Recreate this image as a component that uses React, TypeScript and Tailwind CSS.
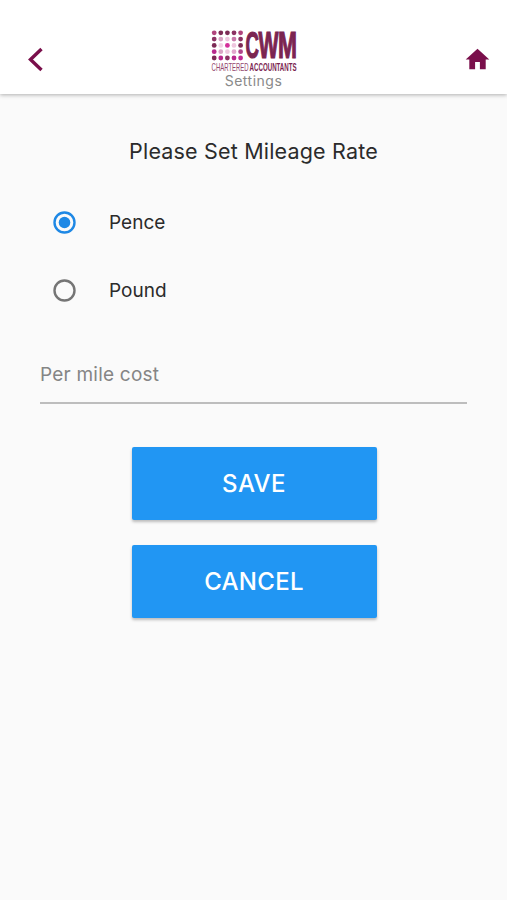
import React, { useState } from "react";

const units = ["Pence", "Pound"];

// Logo dot grid, row by row
const dotColors = [
	["#b0447c", "#7d2a55", "#7d2a55", "#8c3263", "#b0447c"],
	["#8c3263", "#d9a3c4", "#eec6de", "#c978aa", "#8c3263"],
	["#7d2a55", "#f0d3e4", "#d4309a", "#eec6de", "#7d2a55"],
	["#b8288c", "#d9a3c4", "#eec6de", "#e3a7cd", "#b0448a"],
	["#7d2a55", "#b8288c", "#8c3263", "#b8288c", "#c22a94"],
];

const Logo: React.FC = () => (
	<svg width="88" height="43" viewBox="-1.6 0 88 43" className="overflow-visible">
		{dotColors.map((row, y) =>
			row.map((color, x) => (
				<circle
					key={`${x}-${y}`}
					cx={2.6 + x * 6.6}
					cy={2.8 + y * 6.3}
					r={2.4}
					fill={color}
				/>
			))
		)}
		<g fontFamily="Liberation Sans, sans-serif" fill="#7b2551">
			<text
				y="28.2"
				fontSize="37"
				fontWeight="700"
				stroke="#7b2551"
				strokeWidth="1.2"
			>
				<tspan x="34" textLength="13.4" lengthAdjust="spacingAndGlyphs">
					C
				</tspan>
				<tspan x="47" textLength="20" lengthAdjust="spacingAndGlyphs">
					W
				</tspan>
				<tspan x="66.5" textLength="19" lengthAdjust="spacingAndGlyphs">
					M
				</tspan>
			</text>
			<text
				x="0"
				y="41.2"
				fontSize="11.5"
				textLength="37"
				lengthAdjust="spacingAndGlyphs"
				fill="#95486f"
			>
				CHARTERED
			</text>
			<text
				x="38"
				y="41.2"
				fontSize="11.5"
				fontWeight="700"
				textLength="47"
				lengthAdjust="spacingAndGlyphs"
			>
				ACCOUNTANTS
			</text>
		</g>
	</svg>
);

const RadioIcon: React.FC<{ checked: boolean }> = ({ checked }) => {
	const color = checked ? "#1e88e5" : "#757575";
	return (
		<svg width="23" height="23" viewBox="0 0 23 23">
			<circle cx="11.5" cy="11.5" r="10" fill="none" stroke={color} strokeWidth="2.4" />
			{checked && <circle cx="11.5" cy="11.5" r="5.8" fill={color} />}
		</svg>
	);
};

const Header: React.FC = () => (
	<header className="grid h-[94px] grid-cols-[1fr_auto_1fr] items-start bg-white shadow-[0_1px_4px_rgba(0,0,0,0.3)]">
		<button className="ml-[26px] mt-[46px] justify-self-start" aria-label="Back">
			<svg width="18" height="27" viewBox="0 0 18 27" fill="none">
				<path d="M15.5 3 4.5 13.5l11 10.5" stroke="#7a0f4b" strokeWidth="3.4" />
			</svg>
		</button>
		<div className="flex flex-col items-center pt-[30px]">
			<Logo />
			<span className="text-[14px] leading-4 tracking-[0.5px] text-[#8a8a8a]">
				Settings
			</span>
		</div>
		<button className="mr-[17px] mt-[48px] justify-self-end" aria-label="Home">
			<svg width="25" height="22" viewBox="0 0 25 22" fill="#7a0f4b">
				<path d="M12.5.8.7 11.6h3.6v9.6h5.8v-7.3h4.8v7.3h5.8v-9.6h3.6z" />
			</svg>
		</button>
	</header>
);

const App: React.FC = () => {
	const [unit, setUnit] = useState("Pence");

	return (
		<div className="flex min-h-screen flex-col bg-[#fafafa] font-['Inter',sans-serif] text-[#2b2b2b]">
			<Header />
			<main className="flex flex-col px-10 pt-[41px]">
				<h1 className="text-center text-[21.5px] leading-8 tracking-[0.18px]">
					Please Set Mileage Rate
				</h1>

				<div className="mt-[21px]">
					{units.map((name) => (
						<button
							key={name}
							onClick={() => setUnit(name)}
							className="flex h-[68px] w-full items-center gap-[33px] pl-[13px] text-left text-[19px] tracking-[0.02px]"
						>
							<RadioIcon checked={unit === name} />
							<span className="pt-[3px]">{name}</span>
						</button>
					))}
				</div>

				<input
					placeholder="Per mile cost"
					className="mt-[20px] h-[60px] border-b-2 border-[#bdbdbd] bg-transparent pt-[3px] text-[19px] tracking-[0.22px] outline-none placeholder:text-[#858585]"
				/>

				<div className="mt-[43px] flex flex-col items-center gap-[25px] pl-px">
					<button className="h-[73px] w-[245px] rounded-[2px] bg-[#2196f3] text-[24px] font-medium tracking-[0.4px] text-white shadow-[0_2px_3px_rgba(0,0,0,0.25)]">
						SAVE
					</button>
					<button className="h-[73px] w-[245px] rounded-[2px] bg-[#2196f3] text-[24px] font-medium tracking-[0.3px] text-white shadow-[0_2px_3px_rgba(0,0,0,0.25)]">
						CANCEL
					</button>
				</div>
			</main>
		</div>
	);
};

export default App;
